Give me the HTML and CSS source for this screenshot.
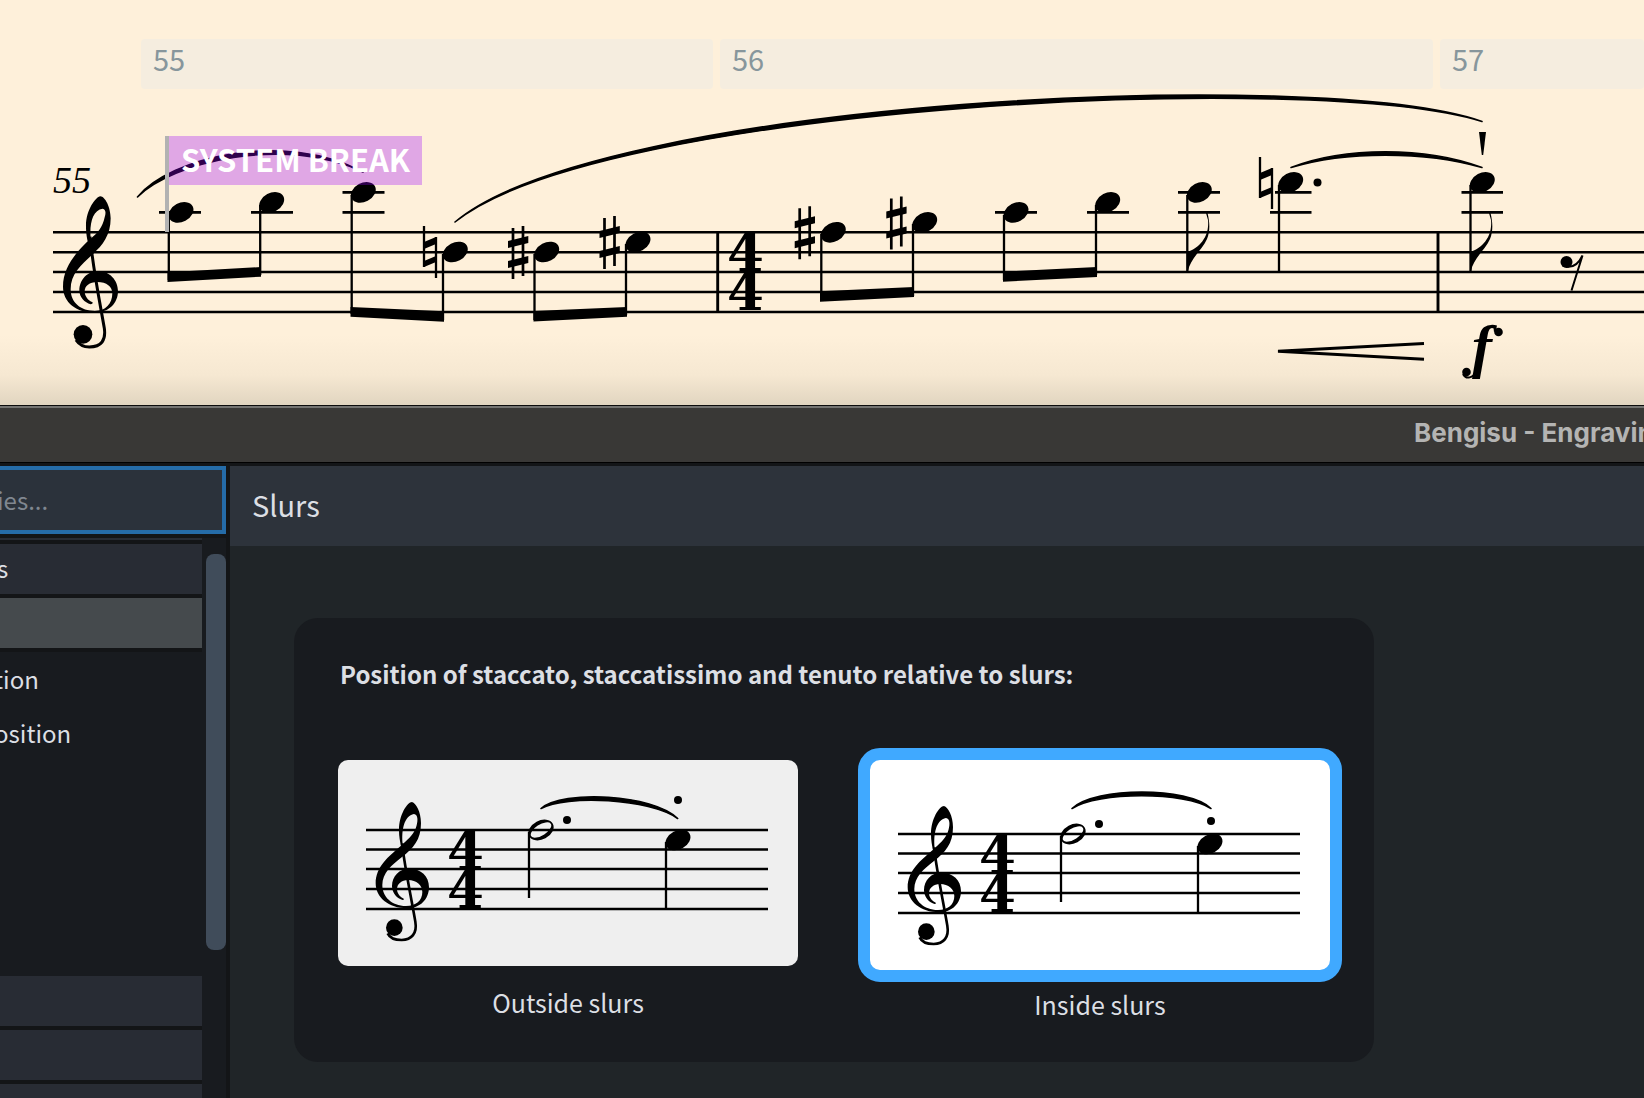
FILE: index.html
```
<!DOCTYPE html>
<html lang="en">
<head>
    <meta charset="UTF-8">
    <meta name="viewport" content="width=device-width, initial-scale=1.0">
    <title>Bengisu</title>
    <link rel="stylesheet" href="styles.css">
</head>
<body>
    <!-- Shared music symbols -->
    <svg class="symbols" width="0" height="0" aria-hidden="true">
        <defs>
            <ellipse id="head" rx="13.2" ry="9.4" transform="rotate(-28)"/>
            <path id="half" fill-rule="evenodd" transform="rotate(-28)" d="M-13.4 0A13.4 9.4 0 1 1 13.4 0A13.4 9.4 0 1 1 -13.4 0ZM-11.6 1A11.6 5.4 -4 1 0 11.6 -1A11.6 5.4 -4 1 0 -11.6 1Z"/>
            <g id="sharp">
                <path d="M-5 -24V27M5 -26V24" fill="none" stroke="#000" stroke-width="2.7"/>
                <path d="M-10 -11L10.3 -16V-9L-10 -4ZM-10 9L10.3 4V11L-10 16Z"/>
            </g>
            <g id="natural">
                <path d="M-6 -26V15M6 -15V26" fill="none" stroke="#000" stroke-width="2.3"/>
                <path d="M-6 -10L6 -15V-8L-6 -3ZM-6 9L6 4V10L-6 15Z"/>
            </g>
            <path id="flag" d="M0 271V252C9 250 23 239 21 220L19 213L20.5 213C23 223 23 232 20 239C15 250 3 259 1 271Z"/>
            <g id="clef">
                <path fill-rule="evenodd" d="M181 229C167 231 138 270 138 318C138 340 141 352 143 364C112 394 69 440 69 500C69 548 110 578 165 578C208 578 234 548 234 514C234 480 208 453 174 453C142 453 118 480 118 511C118 532 134 548 152 553C158 553 160 547 156 546C144 542 134 528 134 514C134 498 148 486 172 486C200 486 217 500 217 520C217 552 196 573 165 573C122 573 92 548 92 508C92 462 122 436 160 401C188 376 212 345 212 295C212 262 195 229 181 229ZM152 356C148 310 158 270 188 266C198 268 198 280 194 292C188 322 172 340 152 356Z"/>
                <path d="M150 350C158 440 180 550 193 625C198 660 185 681 148 681C130 681 118 675 108 660" fill="none" stroke="#000" stroke-width="9"/>
                <circle cx="129" cy="643" r="28"/>
            </g>
            <g id="clef-small">
                <path fill-rule="evenodd" d="M276 186C262 186 237 225 237 270C237 290 240 305 243 317C205 350 167 380 167 430C167 472 205 505 262 505C300 505 327 478 327 441C327 408 303 386 268 386C238 386 216 408 216 438C216 460 232 476 248 480C253 480 253 477 249 475C238 470 231 458 231 448C231 432 245 420 264 420C290 420 307 435 307 456C307 482 288 498 258 498C215 498 187 470 187 435C187 400 215 375 245 352C280 325 303 300 303 250C303 215 288 190 276 186ZM248 312C244 270 252 228 282 222C294 224 294 240 290 256C284 280 268 296 248 312Z"/>
                <path d="M246 310C254 380 275 480 286 545C292 580 275 600 245 600C225 600 210 595 203 580" fill="none" stroke="#000" stroke-width="8"/>
                <circle cx="223" cy="563" r="25"/>
            </g>
            <!-- Staff, clef and time signature used by both option pictures -->
            <g id="example">
                <path d="M28 70H430M28 89.5H430M28 109H430M28 129H430M28 149H430" fill="none" stroke="#000" stroke-width="2.4"/>
                <use href="#clef-small" transform="translate(-18 -20) scale(.3333)"/>
                <text class="meter" x="109" y="109">4</text>
                <text class="meter" x="109" y="148">4</text>
                <use href="#half" x="203" y="70"/>
                <circle cx="229" cy="60" r="4"/>
                <use href="#head" x="340" y="80"/>
                <path d="M191 72V138M328 82V149" fill="none" stroke="#000" stroke-width="2.3"/>
            </g>
        </defs>
    </svg>

    <section class="score">
        <div class="measures">
            <div class="measure">55</div>
            <div class="measure">56</div>
            <div class="measure">57</div>
        </div>

        <svg class="staff" viewBox="0 89 1644 316" preserveAspectRatio="xMinYMin slice" role="img" aria-label="Measures 55 to 57">
            <path d="M53 232.3H1660M53 252.2H1660M53 272.1H1660M53 292H1660M53 311.9H1660" fill="none" stroke="#000" stroke-width="2.5"/>
            <use href="#clef" transform="translate(40 120) scale(.3333)"/>
            <text class="bar-number" x="53" y="193">55</text>

            <!-- Ledger lines -->
            <path d="M159 212.4H201M251 212.4H293M342.5 212.4H384.5M342.5 192.4H384.5M995 212.4H1037M1087 212.4H1129M1178 192.4H1220M1178 212.4H1220M1275 192.4H1311.5M1270 212.4H1311.5M1461.5 192.4H1503M1461.5 212.4H1503" fill="none" stroke="#000" stroke-width="2.9"/>

            <!-- Stems -->
            <path d="M168.8 215V280M260.2 205V275M351.7 195V314M443 254V320M534.5 254V320M626 244V315M821.3 234V300M913 224V296M1004 215V280M1096 205V275M1187.3 195V271M1279 185V271.5M1470.5 185V271.5" fill="none" stroke="#000" stroke-width="2.3"/>

            <!-- Beams -->
            <path d="M167.5 272.3L261 267V276.7L167.5 282ZM350.5 307L444 311.3V321.7L350.5 316.7ZM533.5 311L627 307V316.8L533.5 321.5ZM820 291.3L914 287V297L820 301.7ZM1003 271.7L1097 267V277L1003 281.7Z"/>

            <!-- Barlines -->
            <path d="M717.7 232V312M1438 232V312" fill="none" stroke="#000" stroke-width="2.9"/>

            <use href="#head" x="181" y="212.4"/>
            <use href="#head" x="271.7" y="202.4"/>
            <use href="#head" x="363.3" y="192.4"/>
            <use href="#natural" x="430" y="252"/>
            <use href="#head" x="455.3" y="252"/>
            <use href="#sharp" x="518" y="252"/>
            <use href="#head" x="546.7" y="252"/>
            <use href="#sharp" x="609.5" y="242"/>
            <use href="#head" x="638" y="242"/>

            <text class="meter" x="727" y="271">4</text>
            <text class="meter" x="727" y="310">4</text>

            <use href="#sharp" x="804.7" y="232.3"/>
            <use href="#head" x="833.3" y="232.3"/>
            <use href="#sharp" x="896.3" y="222.4"/>
            <use href="#head" x="924.7" y="222.4"/>
            <use href="#head" x="1016" y="212.4"/>
            <use href="#head" x="1107.7" y="202.4"/>
            <use href="#head" x="1199.3" y="192.4"/>
            <use href="#flag" x="1187"/>
            <use href="#natural" x="1266" y="183"/>
            <use href="#head" x="1290.7" y="182.4"/>
            <circle cx="1317.5" cy="182.6" r="4"/>
            <use href="#head" x="1482.3" y="182.4"/>
            <use href="#flag" x="1470"/>
            <path d="M1479 132H1486L1483.2 155H1481.8Z"/>

            <!-- Eighth rest -->
            <circle cx="1566.5" cy="262" r="6"/>
            <path d="M1566 266.5C1574 268 1579 263 1582.5 255.5L1571.5 290.5" fill="none" stroke="#000" stroke-width="2"/>

            <!-- Slurs -->
            <g stroke="#000" stroke-width="1.6" stroke-linejoin="round">
                <path d="M137.5 197C169 157.5 285 129.5 363 172C285 134.5 171 162.5 137.5 197Z"/>
                <path d="M455 222C600 99.5 1320 65 1482 121.5C1320 70 600 104.5 455 222Z"/>
                <path d="M1291 167.5C1345 146.5 1425 146.5 1482 167.5C1425 151 1345 151 1291 167.5Z"/>
            </g>

            <!-- Crescendo and dynamic -->
            <path d="M1424 343.5L1278 351.3L1424 359.3" fill="none" stroke="#000" stroke-width="2.9" stroke-linejoin="bevel"/>
            <text class="dynamic" x="1472" y="366">f</text>
            <circle cx="1498.5" cy="332" r="4.3"/>
            <circle cx="1466.500" cy="372" r="4.3"/>
            <path d="M1463 374C1466 380 1473 378 1477 371" fill="none" stroke="#000" stroke-width="2"/>
        </svg>

        <div class="break-line"></div>
        <div class="break-tag">SYSTEM BREAK</div>
    </section>

    <section class="window">
        <header class="titlebar">Bengisu - Engravin</header>

        <div class="panes">
            <aside class="sidebar">
                <input class="search" type="text" placeholder="ies..." aria-label="Search categories">
                <div class="list-area">
                    <ul class="list">
                        <li class="row sliver"></li>
                        <li class="row">s</li>
                        <li class="row selected"></li>
                        <li class="sub">tion</li>
                        <li class="sub">osition</li>
                        <li class="space"></li>
                        <li class="row"></li>
                        <li class="row"></li>
                        <li class="row"></li>
                    </ul>
                    <div class="scrollbar"><div class="thumb"></div></div>
                </div>
            </aside>

            <main class="content">
                <h1 class="page-title">Slurs</h1>
                <fieldset class="card">
                    <legend class="card-title">Position of staccato, staccatissimo and tenuto relative to slurs:</legend>
                    <div class="options">
                        <label class="option">
                            <input type="radio" name="position" class="radio">
                            <svg class="picture" viewBox="0 0 460 206">
                                <use href="#example"/>
                                <circle cx="340" cy="40" r="4"/>
                                <path d="M203 48.5C225 29.5 315 34 339.7 58.5C312 38.5 228 34.5 203 48.5Z" stroke="#000" stroke-width="1.6" stroke-linejoin="round"/>
                            </svg>
                            <span class="option-name">Outside slurs</span>
                        </label>
                        <label class="option">
                            <input type="radio" name="position" class="radio" checked>
                            <svg class="picture" viewBox="0 0 460 210">
                                <use href="#example" y="4"/>
                                <circle cx="341" cy="61" r="4"/>
                                <path d="M202 48.5C226 26.5 318 26.5 341 48.5C315 31.5 228 31.5 202 48.5Z" stroke="#000" stroke-width="1.6" stroke-linejoin="round"/>
                            </svg>
                            <span class="option-name">Inside slurs</span>
                        </label>
                    </div>
                </fieldset>
            </main>
        </div>
    </section>
</body>
</html>
```
FILE: styles.css
```
* {
    box-sizing: border-box;
}
body {
    margin: 0;
    height: 100vh;
    display: flex;
    flex-direction: column;
    overflow: hidden;
    font-family: "Noto Sans CJK SC", "Noto Sans", sans-serif;
    font-size: 24px;
    color: #dcdfe4;
    background-color: #131517;
}
.symbols {
    position: absolute;
}

/* Score */
.score {
    position: relative;
    flex: none;
    padding-top: 39px;
    background: linear-gradient(to bottom, #fef0da 0, #fef0da 335px, #f6e8d2 375px, #e1d5c0 405px);
}
.measures {
    display: grid;
    grid-template-columns: 572fr 713fr 204fr;
    gap: 7px;
    padding-left: 141px;
}
.measure {
    height: 50px;
    padding-left: 12px;
    border-radius: 4px;
    background-color: #f5eddf;
    color: #87969c;
    font-size: 29px;
    line-height: 38px;
}
.staff {
    display: block;
    width: 100%;
    height: 316px;
}
.bar-number {
    font: italic 38px "Liberation Serif", serif;
}
.meter {
    font: bold 53px "DejaVu Serif", serif;
}
.dynamic {
    font: italic bold 60px "Liberation Serif", serif;
}
.break-line {
    position: absolute;
    left: 165px;
    top: 136px;
    width: 4px;
    height: 96px;
    background-color: #b2b2b2;
}
.break-tag {
    position: absolute;
    left: 169px;
    top: 136px;
    height: 49px;
    padding: 0 12px;
    background-color: rgba(155, 0, 255, 0.3);
    color: white;
    font-size: 31px;
    font-weight: bold;
    line-height: 45px;
    white-space: nowrap;
}

/* Options window */
.window {
    flex: 1;
    min-height: 0;
    display: flex;
    flex-direction: column;
    border-top: 1px solid #0c0c0c;
}
.titlebar {
    flex: none;
    height: 57px;
    padding-left: 1414px;
    border-top: 2px solid #747472;
    border-bottom: 1px solid #000;
    background-color: #393836;
    color: #b4b4b3;
    font-family: Inter, sans-serif;
    font-size: 26px;
    font-weight: bold;
    line-height: 50px;
    white-space: nowrap;
    overflow: hidden;
}
.panes {
    flex: 1;
    min-height: 0;
    display: flex;
    gap: 4px;
    padding-top: 3px;
}
.sidebar {
    flex: none;
    width: 226px;
    display: flex;
    flex-direction: column;
    gap: 4px;
}
.search {
    width: 100%;
    height: 68px;
    padding: 0 0 2px;
    border: 4px solid #256ca8;
    border-left: none;
    border-radius: 0;
    background-color: #2b323b;
    color: #dcdfe4;
    font-family: inherit;
    font-size: 24px;
    text-indent: -3px;
    outline: none;
}
.search::placeholder {
    color: #808790;
    opacity: 1;
}
.list-area {
    flex: 1;
    min-height: 0;
    display: flex;
    background-color: #181b1f;
    overflow: hidden;
}
.list {
    flex: 1;
    margin: 0;
    padding: 0;
    list-style: none;
}
.row {
    height: 54px;
    border-bottom: 4px solid #131517;
    background-color: #282c34;
    line-height: 48px;
    text-indent: -3px;
}
.sliver {
    height: 6px;
}
.selected {
    background-color: #454a4d;
}
.sub {
    height: 54px;
    line-height: 54px;
    text-indent: -6px;
}
.space {
    height: 216px;
}
.scrollbar {
    width: 24px;
    padding: 16px 0 0 4px;
}
.thumb {
    height: 396px;
    border-radius: 8px;
    background-color: #404c5a;
}
.content {
    flex: 1;
    background-color: #202528;
}
.page-title {
    height: 80px;
    margin: 0 0 72px;
    padding-left: 22px;
    background-color: #2d333b;
    font-size: 29px;
    font-weight: normal;
    line-height: 77px;
}
.card {
    max-width: 1080px;
    margin: 0 64px;
    padding: 34px 32px 37px 44px;
    border: none;
    border-radius: 24px;
    background-color: #181b1f;
}
.card-title {
    float: left;
    width: 100%;
    margin-bottom: 52px;
    padding: 0 2px;
    font-size: 24px;
    font-weight: bold;
    line-height: 44px;
}
.options {
    clear: both;
    display: grid;
    grid-template-columns: 460fr 484fr;
    gap: 60px;
}
.option {
    display: flex;
    flex-direction: column;
    align-items: center;
}
.radio {
    position: absolute;
    opacity: 0;
}
.picture {
    width: 100%;
    margin: 12px 0 14px;
    border-radius: 10px;
    background-color: #efefef;
}
.radio:checked + .picture {
    margin: 0;
    border: 12px solid #40a9ff;
    border-radius: 22px;
    background-color: white;
}
.option-name {
    padding-top: 1px;
    font-size: 25px;
    line-height: 42px;
}
```
